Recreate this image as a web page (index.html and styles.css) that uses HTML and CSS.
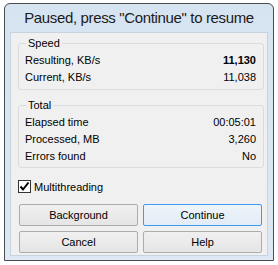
FILE: index.html
```html
<!DOCTYPE html>
<html lang="en">
<head>
  <meta charset="UTF-8">
  <title>Paused</title>
  <link rel="stylesheet" href="styles.css">
</head>
<body>

  <div class="window">
    <div class="titlebar">Paused, press "Continue" to resume</div>
    <div class="client">

      <fieldset class="group">
        <legend>Speed</legend>
        <div class="row"><span>Resulting, KB/s</span><b>11,130</b></div>
        <div class="row"><span>Current, KB/s</span><span>11,038</span></div>
      </fieldset>

      <fieldset class="group total">
        <legend>Total</legend>
        <div class="row"><span>Elapsed time</span><span>00:05:01</span></div>
        <div class="row"><span>Processed, MB</span><span>3,260</span></div>
        <div class="row"><span>Errors found</span><span>No</span></div>
      </fieldset>

      <label class="check">
        <span class="box">
          <svg width="11" height="11" viewBox="0 0 11 11">
            <path d="M1.5 5.5 L4 8.5 L9.5 1.5" fill="none" stroke="#000" stroke-width="2"/>
          </svg>
        </span>
        Multithreading
      </label>

      <div class="buttons">
        <button>Background</button>
        <button class="default">Continue</button>
        <button>Cancel</button>
        <button>Help</button>
      </div>

    </div>
  </div>

</body>
</html>
```

FILE: styles.css
```css
body {
  margin: 0;
  padding: 0;
  background-color: #fff;
  font-family: "Liberation Sans", Arial, sans-serif;
  font-size: 11px;
  color: #000;
}
.window {
  margin: 3px 0 0 4px;
  width: 270px;
  height: 258px;
  box-sizing: border-box;
  border: 1px solid #474b52;
  border-radius: 6px 6px 0 0;
  background: linear-gradient(#d6e3f1, #dde8f4);
  display: flex;
  flex-direction: column;
  padding: 0 5px 4px 5px;
}
.titlebar {
  height: 28px;
  line-height: 27px;
  text-align: center;
  font-size: 15px;
  letter-spacing: -0.35px;
  color: #1b1b1b;
  flex-shrink: 0;
}
.client {
  flex: 1;
  background-color: #f0f0f0;
  border: 1px solid #c7d3e0;
  padding: 2px 3px 0 7px;
}
.group {
  margin: 0;
  border: 1px solid #dcdcdc;
  border-radius: 3px;
  padding: 1px 7px 3px 6px;
}
.group legend {
  padding: 0 2px;
  margin-left: 1px;
  line-height: 16px;
}
.total {
  margin-top: 7px;
  padding-bottom: 2px;
}
.row {
  display: flex;
  justify-content: space-between;
  height: 17px;
  line-height: 17px;
}
.check {
  display: flex;
  align-items: center;
  margin-top: 12px;
  height: 13px;
}
.box {
  width: 11px;
  height: 11px;
  border: 1px solid #333;
  background: #fff;
  margin-right: 3px;
  display: flex;
  align-items: center;
  justify-content: center;
}
.buttons {
  display: grid;
  grid-template-columns: 119px 119px;
  gap: 5px;
  margin: 11px 0 0 1px;
}
button {
  height: 22px;
  font-family: "Liberation Sans", Arial, sans-serif;
  font-size: 11px;
  color: #000;
  border: 1px solid #acacac;
  border-radius: 2px;
  background: linear-gradient(#f0f0f0, #e5e5e5);
  padding: 0;
}
button.default {
  border-color: #3c9cf3;
  background: linear-gradient(#eef4fa, #e3ecf5);
}
```
